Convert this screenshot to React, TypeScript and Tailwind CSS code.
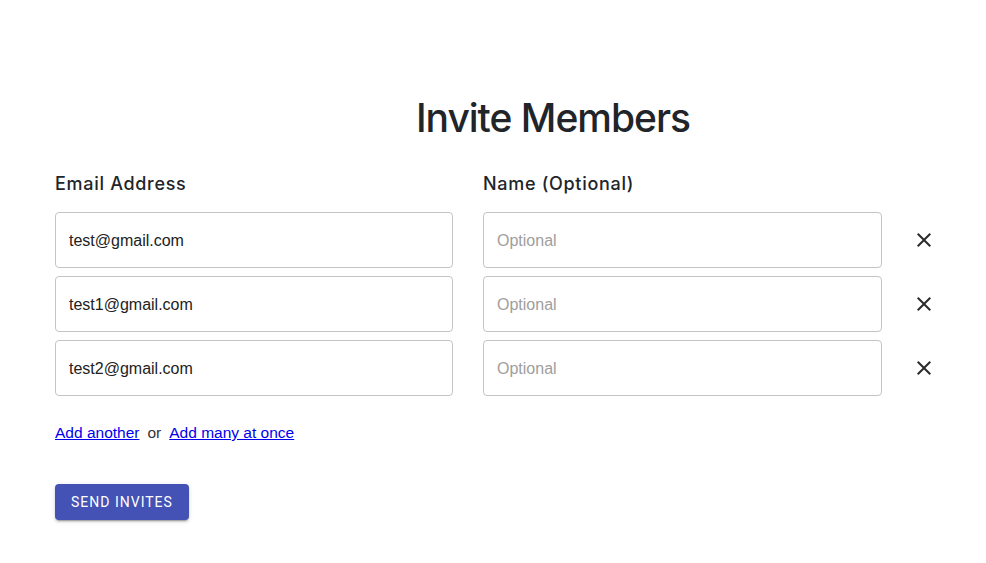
const rows = ["test@gmail.com", "test1@gmail.com", "test2@gmail.com"];

function CloseIcon() {
  return (
    <svg viewBox="0 0 24 24" className="h-6 w-6" fill="#2b2b2b">
      <path d="M19 6.41 17.59 5 12 10.59 6.41 5 5 6.41 10.59 12 5 17.59 6.41 19 12 13.41 17.59 19 19 17.59 13.41 12z" />
    </svg>
  );
}

export default function App() {
  return (
    <div className="min-h-[563px] w-full bg-white" style={{ fontFamily: "Inter, sans-serif" }}>
      <div className="flex justify-center pl-[120px] pt-[94px]">
        <h1 className="text-[39px] leading-[48px] font-medium tracking-[-1px] text-[#212529]">
          Invite Members
        </h1>
      </div>

      <div className="pl-[55px] pt-[30px]">
        <div className="grid grid-cols-[398px_399px_24px] gap-x-[30px]">
          <div className="text-[18px] leading-6 font-medium tracking-[0.7px] text-[#212529]">Email Address</div>
          <div className="text-[18px] leading-6 font-medium tracking-[0.7px] text-[#212529]">Name (Optional)</div>
          <div />
        </div>

        <div className="mt-[16px] flex flex-col gap-2">
          {rows.map((email) => (
            <div key={email} className="grid grid-cols-[398px_399px_24px] items-center gap-x-[30px]">
              <input
                defaultValue={email}
                className="h-[56px] rounded border border-[#c4c4c4] px-[13px] pt-[2px] text-[16px] text-[#222] outline-none"
                style={{ fontFamily: '"Liberation Sans", Arial, sans-serif' }}
              />
              <input
                placeholder="Optional"
                className="h-[56px] rounded border border-[#c4c4c4] px-[13px] pt-[2px] text-[16px] text-[#222] outline-none placeholder:text-[#9e9e9e]"
                style={{ fontFamily: '"Liberation Sans", Arial, sans-serif' }}
              />
              <button className="flex items-center justify-center">
                <CloseIcon />
              </button>
            </div>
          ))}
        </div>

        <div
          className="mt-[27px] flex items-center gap-2 text-[15.5px] leading-5"
          style={{ fontFamily: '"Liberation Sans", Arial, sans-serif' }}
        >
          <a href="#" className="text-[#0000ee] underline">Add another</a>
          <span className="text-[#333]">or</span>
          <a href="#" className="text-[#0000ee] underline">Add many at once</a>
        </div>

        <button
          className="mt-[41px] h-9 rounded bg-[#4352b4] px-4 text-[14px] uppercase tracking-[1px] text-white shadow-[0_3px_1px_-2px_rgba(0,0,0,0.2),0_2px_2px_0_rgba(0,0,0,0.14),0_1px_5px_0_rgba(0,0,0,0.12)]"
          style={{ fontFamily: "Roboto, sans-serif" }}
        >
          Send Invites
        </button>
      </div>
    </div>
  );
}
